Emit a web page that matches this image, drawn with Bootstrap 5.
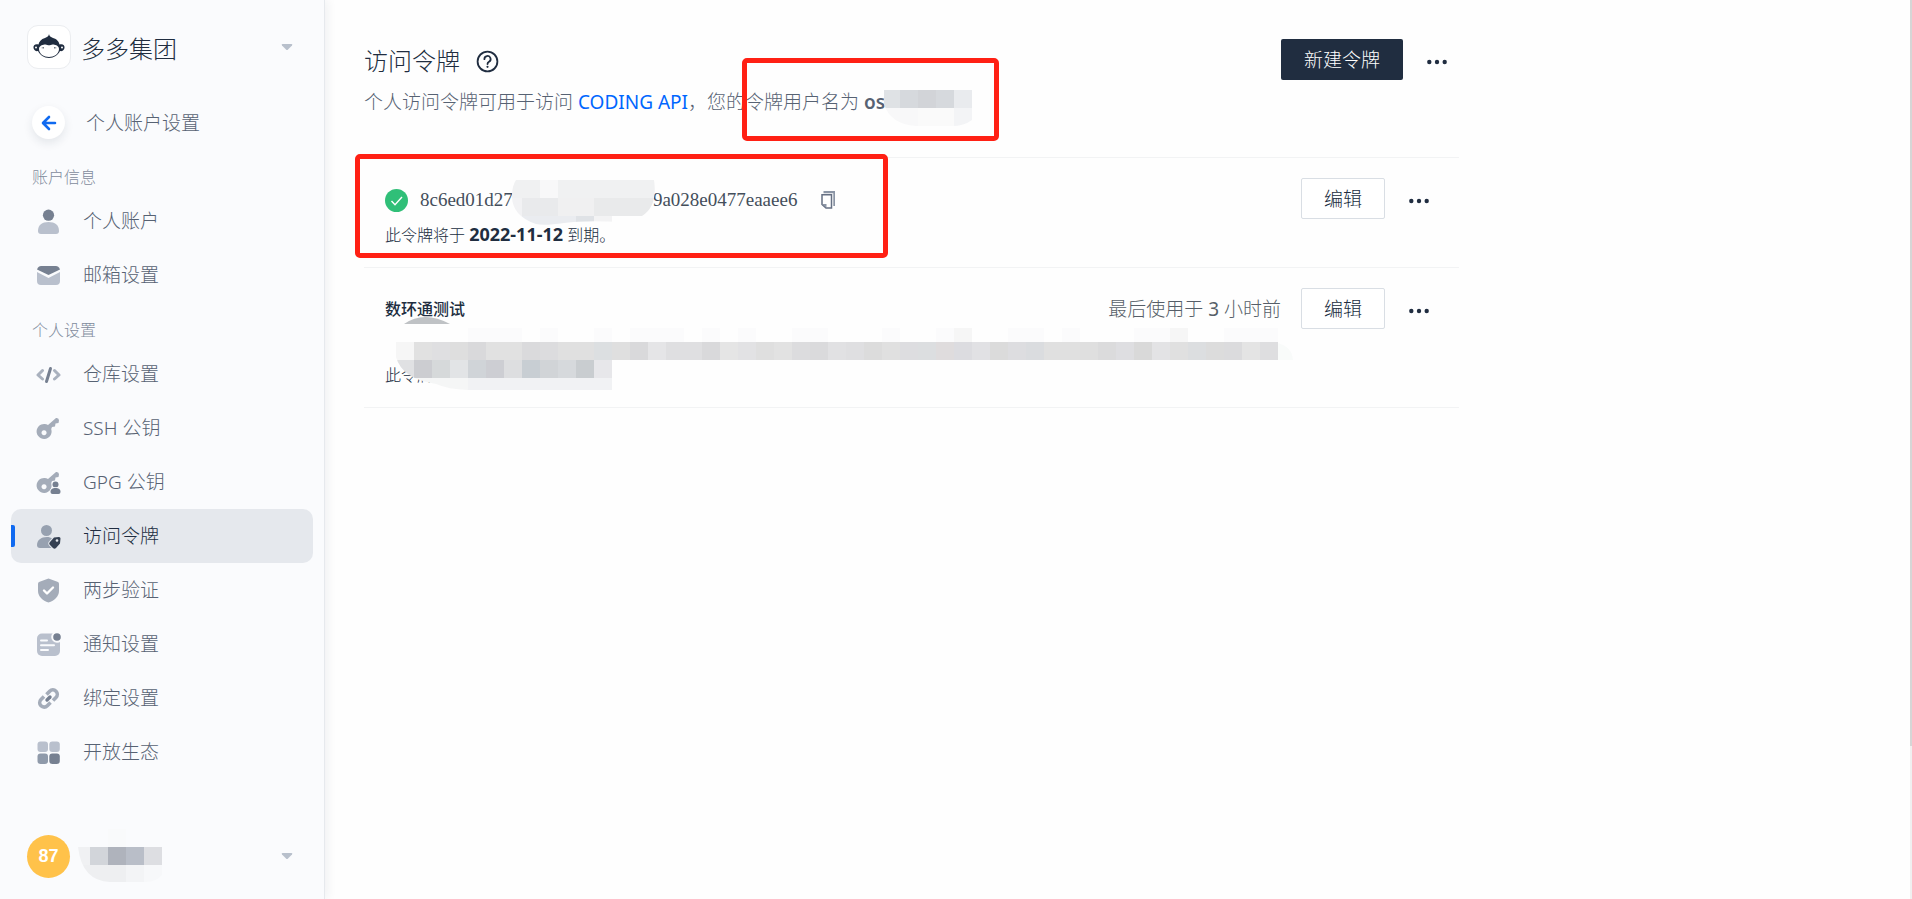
<!DOCTYPE html>
<html lang="zh-CN">
<head>
<meta charset="utf-8">
<meta name="viewport" content="width=device-width, initial-scale=1">
<title>访问令牌</title>
<link href="https://cdn.jsdelivr.net/npm/bootstrap@5.3.0/dist/css/bootstrap.min.css" rel="stylesheet">
<style>
  :root { --ink:#202d40; --muted:#576273; --soft:#7f8b9c; --line:#f2f3f4; --blue:#0066ff; --red:#ff2014; }
  body { font-family:"Noto Sans","Noto Sans CJK SC",sans-serif; font-size:19px; line-height:28px; font-weight:300; color:var(--ink); background:#fefefe; }
  a { text-decoration:none; }
  svg { display:block; flex:none; }
  .side { width:325px; background:#fafbfd; border-right:1px solid #e6e9ed; box-shadow:2px 0 10px rgba(32,45,64,.07); }
  .team-row { padding:25px 31px 0 27px; height:96px; gap:10px; }
  .logo { width:44px; height:44px; border-radius:11px; background:#fff; border:1px solid #ebedf0; }
  .title-text { font-size:24px; line-height:32px; font-weight:300; }
  .back-row { padding:0 0 0 32px; height:53px; gap:21px; color:var(--muted); }
  .back-dot { width:33px; height:33px; background:#fff; box-shadow:0 4px 10px rgba(32,45,64,.1); }
  .group-title { font-size:16px; line-height:24px; padding:16px 0 5px 32px; margin:0; font-weight:300; color:var(--soft); }
  .side-link { height:54px; margin:0 11px; padding-left:25px; gap:22px; color:var(--muted); border-radius:10px; position:relative; }
  .side-link.current { background:#e5e8ed; color:var(--ink); }
  .side-link.current::before { content:""; position:absolute; left:0; top:16px; width:4px; height:22px; background:#106af0; border-radius:0 2px 2px 0; }
  .user-row { padding:0 31px 16px 27px; gap:8px; }
  .avatar { width:43px; height:43px; background:#ffc24a; color:#fff; font:bold 18px "Liberation Sans",sans-serif; }
  .plain { border:0; background:none; padding:0; color:inherit; }
  .main-pane { padding:0 39px; }
  .content { max-width:1095px; }
  .page-head { height:158px; padding-top:39px; border-bottom:1px solid var(--line); }
  .heading-row { padding-top:6px; }
  .desc { color:var(--muted); margin:11px 0 0; white-space:nowrap; line-height:28px; }
  .desc a { color:var(--blue); font-weight:400; }
  .btn-flat { font-size:19px; line-height:28px; font-weight:300; padding:5px 22px; border-radius:2px; height:41px; }
  .btn-new { background:#202d40; color:#fff; }
  .btn-edit { background:#fff; border:1px solid #d9dee4; color:var(--ink); }
  .token { padding:20px 0 0 21px; border-bottom:1px solid var(--line); height:110px; }
  .token.tall { height:140px; }
  .acts { padding-right:30px; gap:20px; }
  .last-used { color:#565e68; }
  .code-text { font:400 19px/28px "Liberation Serif",serif; color:#444e5b; }
  .code-line { height:44px; }
  .small-text { font-size:16px; line-height:24px; }
  .small-text strong { font-size:18px; font-weight:700; }
  .name { font-size:16px; line-height:24px; font-weight:500; margin:0 0 42px; padding-top:9px; }
  .code-gap { width:140px; }
  .red-frame { position:absolute; border:5px solid var(--red); border-radius:5px; pointer-events:none; }
  .frame-user { left:378px; top:58px; width:257px; height:83px; }
  .frame-token { left:-9px; top:-4px; width:533px; height:104px; z-index:2; }
  .cover { position:absolute; }
  .cover-user { left:520px; top:90px; }
  .cover-code { left:148px; top:22px; }
  .cover-row { left:32px; top:48px; }
  .scroll-track { position:absolute; right:0; top:0; width:2px; height:100%; background:#f0f0f0; }
  .scroll-thumb { height:83%; background:#d6d6d6; }
</style>
</head>
<body>
<div class="d-flex min-vh-100 position-relative">
  <aside class="side d-flex flex-column flex-shrink-0">
    <div class="team-row d-flex align-items-start">
      <span class="logo d-flex align-items-center justify-content-center">
        <svg width="32" height="26" viewBox="0 0 32 26"><path d="M16 0c0 2 2 3 4 4 4 1 6 4 6.500 6.500 3-1 5.500.5 5 3.500-.4 2.500-2.500 3.500-4.500 3-2 4-6 7-11 7S7 21 5 17C3 17.500.9 16.500.5 14 0 11 2.500 9.500 5.500 10.500 6 8 8 5 12 4c2-1 4-2 4-4z" fill="#202d40"/><path d="M6 15c0-3 3-4 5.500-4.500 2-.5 3 .8 4.500.8s2.500-1.300 4.500-.8C23 11 26 12 26 15c0 5-5 8-10 8S6 20 6 15z" fill="#fff"/><path d="M8 14l3-1v1.500zM24 14l-3-1v1.500z" fill="#59616d"/><circle cx="3" cy="13.500" r="1" fill="#fff"/><circle cx="29" cy="13.500" r="1" fill="#fff"/></svg>
      </span>
      <span class="title-text mt-2">多多集团</span>
      <button class="plain ms-auto mt-3" aria-label="切换团队"><svg width="12" height="12" viewBox="0 0 12 12"><path d="M1.500 3h9q1.500 0 .5 1.500L7 8.500q-1 1-2 0L1 4.500Q0 3 1.500 3z" fill="#b8c0cc"/></svg></button>
    </div>
    <a href="#" class="back-row d-flex align-items-center">
      <span class="back-dot rounded-circle d-flex align-items-center justify-content-center"><svg width="16" height="16" viewBox="0 0 16 16" fill="none" stroke="#106af0" stroke-width="2.600" stroke-linecap="round" stroke-linejoin="round"><path d="M14 8H2.500M8 2L2 8l6 6"/></svg></span>
      <span>个人账户设置</span>
    </a>
    <nav>
      <h2 class="group-title">账户信息</h2>
      <a href="#" class="side-link d-flex align-items-center"><svg width="25" height="25" viewBox="0 0 25 25"><circle cx="12.500" cy="6.200" r="5.600" fill="#768091"/><path d="M2 22c0-6 4-9 10.500-9S23 16 23 22q0 3-3 3H5q-3 0-3-3z" fill="#b9c0cd"/></svg><span>个人账户</span></a>
      <a href="#" class="side-link d-flex align-items-center"><svg width="25" height="25" viewBox="0 0 25 25"><path d="M1 6.500C2 3.500 3.500 3 5 3h15c1.500 0 3 .5 4 3.500L12.500 12z" fill="#768091"/><path d="M1 9l11.500 6L24 9v9q0 4-4 4H5q-4 0-4-4z" fill="#b9c0cd"/></svg><span>邮箱设置</span></a>
      <h2 class="group-title">个人设置</h2>
      <a href="#" class="side-link d-flex align-items-center"><svg width="25" height="25" viewBox="0 0 25 25" fill="none" stroke-linecap="round" stroke-linejoin="round" stroke-width="3"><path d="M6.500 8.500L2 13l4.500 4M18.500 8.500L23 13l-4.500 4" stroke="#a9b1be"/><path d="M14.500 6.500l-4 13" stroke="#768091"/></svg><span>仓库设置</span></a>
      <a href="#" class="side-link d-flex align-items-center"><svg width="25" height="25" viewBox="0 0 25 25"><path fill="#a4acb9" fill-rule="evenodd" d="M20 2q3-.5 3 2.500l-.5 2.500-3 .5-.5 3-3 .5-.8 2A7.500 7.500 0 1 1 12 9zM8 14.300a2.500 2.500 0 1 0 .1 0z"/></svg><span>SSH 公钥</span></a>
      <a href="#" class="side-link d-flex align-items-center"><svg width="25" height="25" viewBox="0 0 25 25"><path fill="#a4acb9" fill-rule="evenodd" d="M20 2q3-.5 3 2.500l-.5 2.500-3 .5-.5 3-3 .5-.8 2A7.500 7.500 0 1 1 12 9zM8 14.300a2.500 2.500 0 1 0 .1 0z"/><g fill="#768091" stroke="#fafbfd" stroke-width="1.500" paint-order="stroke"><circle cx="19.500" cy="14.500" r="3"/><path d="M14.500 22c0-3 2-4 5-4s5 1 5 4q0 2-2 2h-6q-2 0-2-2z"/></g></svg><span>GPG 公钥</span></a>
      <a href="#" class="side-link current d-flex align-items-center" aria-current="page"><svg width="25" height="25" viewBox="0 0 25 25"><circle cx="10.500" cy="6.500" r="5.500" fill="#97a1b0"/><path d="M1 21c0-5 4-8 10-8 4 0 8 2 8 7l-2 4H4q-3 0-3-3z" fill="#97a1b0"/><path d="M18 13.500l5-.5q1.500 0 1.500 1.500l-.5 5-4 4.500q-1.500 1.500-3 0l-3-3q-1.500-1.500 0-3z" fill="#354052" stroke="#e5e8ed" stroke-width="2" paint-order="stroke"/><circle cx="21" cy="16.500" r="1.300" fill="#e5e8ed"/></svg><span>访问令牌</span></a>
      <a href="#" class="side-link d-flex align-items-center"><svg width="25" height="25" viewBox="0 0 25 25"><path d="M12.500.5L22 4q1 .5 1 2v7c0 5.500-4.500 9.500-10.500 11.500C6.500 22.500 2 18.500 2 13V6q0-1.500 1-2z" fill="#a4acb9"/><path d="M8 12.500l3 3 6-6" fill="none" stroke="#fff" stroke-width="2.400" stroke-linecap="round" stroke-linejoin="round"/></svg><span>两步验证</span></a>
      <a href="#" class="side-link d-flex align-items-center"><svg width="25" height="25" viewBox="0 0 25 25"><rect x="1" y="1.500" width="23" height="22.500" rx="5" fill="#b9c0cd"/><path d="M5 8.500h6M5 13.200h13M5 18h7" stroke="#fafbfd" stroke-width="2" stroke-linecap="round"/><circle cx="21" cy="5" r="4.800" fill="#768091" stroke="#fafbfd" stroke-width="2"/></svg><span>通知设置</span></a>
      <a href="#" class="side-link d-flex align-items-center"><svg width="25" height="25" viewBox="0 0 25 25" fill="none"><path d="M10.500 8.500l3.200-3.300a4.400 4.400 0 0 1 6.300 6.300l-3 3M14.500 16.500l-3.200 3.300A4.400 4.400 0 0 1 5 13.500l3-3" stroke="#a4acb9" stroke-width="3.600"/><path d="M11 14l3-3" stroke="#768091" stroke-width="3.400" stroke-linecap="round"/></svg><span>绑定设置</span></a>
      <a href="#" class="side-link d-flex align-items-center"><svg width="25" height="25" viewBox="0 0 25 25"><rect x="1.500" y="1.500" width="10.500" height="10.500" rx="3" fill="#b9c0cd"/><rect x="13.300" y="1.500" width="10.500" height="10.500" rx="3" fill="#b9c0cd"/><rect x="1.500" y="13.500" width="10.500" height="10.500" rx="3" fill="#8f9aaa"/><rect x="13.300" y="13.500" width="10.500" height="10.500" rx="3" fill="#768091"/></svg><span>开放生态</span></a>
    </nav>
    <div class="user-row d-flex align-items-center mt-auto">
      <span class="avatar rounded-circle d-flex align-items-center justify-content-center">87</span>
      <svg width="84" height="54" viewBox="0 0 84 54"><clipPath id="uc"><path d="M0 18h30V0h18v18h36v28q-6 7-16 7H32Q4 52 0 18z"/></clipPath><g clip-path="url(#uc)"><path fill="#f9fafb" d="M30 0h18v18H30z"/><path fill="#f0f1f3" d="M0 18h12v18H0z"/><path fill="#d2d5da" d="M12 18h18v18H12z"/><path fill="#afb3bc" d="M30 18h18v18H30z"/><path fill="#b9bec8" d="M48 18h18v18H48z"/><path fill="#dddee2" d="M66 18h18v18H66z"/><path fill="#eeeff1" d="M0 36h48v18H0z"/><path fill="#f3f4f6" d="M48 36h18v18H48z"/><path fill="#f7f8fa" d="M66 36h18v18H66z"/></g></svg>
      <button class="plain ms-auto" aria-label="账户菜单"><svg width="12" height="12" viewBox="0 0 12 12"><path d="M1.500 3h9q1.500 0 .5 1.500L7 8.500q-1 1-2 0L1 4.500Q0 3 1.500 3z" fill="#b8c0cc"/></svg></button>
    </div>
  </aside>

  <main class="main-pane flex-grow-1">
    <div class="content">
      <header class="page-head position-relative d-flex justify-content-between align-items-start">
        <div>
          <div class="heading-row d-flex align-items-center">
            <h1 class="title-text m-0">访问令牌</h1>
            <button class="plain ms-3" aria-label="帮助"><svg width="23" height="23" viewBox="0 0 23 23" fill="none" stroke="#202d40" stroke-width="1.800"><circle cx="11.500" cy="11.500" r="9.900"/><path d="M8.400 9.200a3.100 3.100 0 1 1 4.600 2.600c-1 .6-1.500 1.100-1.500 2.300" stroke-linecap="round"/><circle cx="11.500" cy="16.800" r="1.100" fill="#202d40" stroke="none"/></svg></button>
          </div>
          <p class="desc">个人访问令牌可用于访问 <a href="#">CODING API</a>，您的令牌用户名为 <span class="fw-semibold">os</span></p>
        </div>
        <div class="d-flex align-items-center gap-4 pe-2">
          <button class="btn btn-flat btn-new">新建令牌</button>
          <button class="plain mt-1 me-1" aria-label="更多"><svg width="20" height="6" viewBox="0 0 20 6" fill="#202d40"><circle cx="2.300" cy="3" r="2.200"/><circle cx="10" cy="3" r="2.200"/><circle cx="17.700" cy="3" r="2.200"/></svg></button>
        </div>
        <svg class="cover cover-user" width="88" height="36" viewBox="0 0 88 36"><clipPath id="oc"><path d="M0 0h88v30q-8 6-20 6H32Q6 34 0 14z"/></clipPath><g clip-path="url(#oc)"><path fill="#dfe2e5" d="M0 0h16v18H0z"/><path fill="#d6d9dd" d="M16 0h54v18H16z"/><path fill="#d2d4d8" d="M34 0h18v18H34z"/><path fill="#e9ebee" d="M70 0h18v18H70z"/><path fill="#f8f8f9" d="M0 18h34v18H0z"/><path fill="#fafafa" d="M34 18h36v18H34z"/><path fill="#f3f4f6" d="M70 18h18v18H70z"/></g></svg>
        <div class="red-frame frame-user"></div>
      </header>

      <section class="token position-relative d-flex justify-content-between align-items-start">
        <div>
          <div class="code-line d-flex align-items-center">
            <svg width="23" height="23" viewBox="0 0 23 23"><circle cx="11.500" cy="11.500" r="11.500" fill="#30bf78"/><path d="M6.500 12l3.500 3.700L17 8" fill="none" stroke="#fff" stroke-width="1.400"/></svg>
            <span class="code-text d-flex ms-2 ps-1"><span>8c6ed01d27</span><span class="code-gap"></span><span>9a028e0477eaaee6</span></span>
            <button class="plain ms-4" aria-label="复制"><svg width="14" height="18" viewBox="0 0 14 18"><path d="M2.500 1h11v14" fill="none" stroke="#8b95a5" stroke-width="2.400"/><path d="M1 3.800h9.500V17H5l-4-3.500z" fill="#fff" stroke="#667083" stroke-width="1.500"/><path d="M1 13h4.500v4" fill="#8b95a5"/></svg></button>
          </div>
          <div class="small-text">此令牌将于 <strong>2022-11-12</strong> 到期。</div>
        </div>
        <div class="acts d-flex align-items-center">
          <button class="btn btn-flat btn-edit">编辑</button>
          <button class="plain mt-1 ms-1" aria-label="更多"><svg width="20" height="6" viewBox="0 0 20 6" fill="#202d40"><circle cx="2.300" cy="3" r="2.200"/><circle cx="10" cy="3" r="2.200"/><circle cx="17.700" cy="3" r="2.200"/></svg></button>
        </div>
        <svg class="cover cover-code" width="144" height="46" viewBox="0 0 144 46"><clipPath id="tc"><path d="M4 0h138q4 26-12 36h-22v6q-34-2-56 1-20 3-28 1Q0 36 0 16 0 6 4 0z"/></clipPath><g clip-path="url(#tc)"><path fill="#f0f1f2" d="M0 0h144v18H0z"/><path fill="#f8f8f9" d="M28 0h18v18H28z"/><path fill="#e9eaec" d="M10 18h36v18H10z"/><path fill="#f2f2f4" d="M0 18h10v28H0z"/><path fill="#f0f0f1" d="M46 18h36v18H46z"/><path fill="#e9eaeb" d="M82 18h62v18H82z"/><path fill="#eaecf0" d="M10 36h54v10H10z"/><path fill="#dfe2e6" d="M64 36h18v10H64z"/><path fill="#f3f3f4" d="M82 36h18v10H82z"/></g></svg>
        <div class="red-frame frame-token"></div>
      </section>

      <section class="token tall position-relative d-flex justify-content-between align-items-start">
        <div>
          <h3 class="name">数环通测试</h3>
          <div class="small-text">此令牌</div>
        </div>
        <div class="acts d-flex align-items-center">
          <span class="last-used">最后使用于 <span class="fw-normal">3</span> 小时前</span>
          <button class="btn btn-flat btn-edit">编辑</button>
          <button class="plain mt-1 ms-1" aria-label="更多"><svg width="20" height="6" viewBox="0 0 20 6" fill="#202d40"><circle cx="2.300" cy="3" r="2.200"/><circle cx="10" cy="3" r="2.200"/><circle cx="17.700" cy="3" r="2.200"/></svg></button>
        </div>
        <svg class="cover cover-row" width="898" height="74" viewBox="0 0 898 74"><clipPath id="rc"><path d="M0 20h882q14 4 15 17H216v30h-30H86Q56 68 40 61 6 56 0 34zM0 4h882v17H0z"/></clipPath><path d="M8 8Q28-6 54 8z" fill="#bfc2c5"/><g clip-path="url(#rc)" transform="translate(0 7)" id="cells"></g></svg>
      </section>
    </div>
  </main>
  <div class="scroll-track"><div class="scroll-thumb"></div></div>
</div>
<script src="https://cdn.jsdelivr.net/npm/bootstrap@5.3.0/dist/js/bootstrap.bundle.min.js"></script>
<script>
  // Censor mosaic of the second token, drawn in 18px cells
  const cells = document.getElementById('cells');
  const cell = (x, y, h, fill, w = 18) => {
    const r = document.createElementNS('http://www.w3.org/2000/svg', 'rect');
    Object.entries({ x, y, width: w, height: h, fill }).forEach(([k, v]) => r.setAttribute(k, v));
    cells.appendChild(r);
  };
  [4, 5, 6, 8, 11, 13, 14, 15, 17, 19, 22, 23, 27, 30, 31, 34, 35, 37, 41, 42, 43, 46, 47, 48].forEach(i => cell(i * 18, 5, 14, i === 43 || i === 31 ? '#f6f6f6' : '#fbfbfc'));
  const band = ['#e1e1e1', '#dfdfe1', '#dedede', '#d9d9db', '#e1e1e1', '#e1e1e1', '#dadadc', '#dcdcde', '#e0e0e0', '#e0e0e0', '#dcdfe1', '#dfdfdf', '#d9d9db', '#e5e5e7', '#dfdfe1', '#dfdfe1', '#d9d9db', '#e5e5e5', '#e2e2e4', '#dfdfdf', '#e2e2e2', '#dcdcde', '#dadadc', '#e1e1e3', '#dfdfe1', '#dcdcdc', '#e0e0e0', '#dddde0', '#dcdee0', '#dfdcdd', '#dcdce0', '#e1e1e4', '#dbdbdb', '#dddde0', '#dadcdf', '#e0e0e0', '#e0e0e0', '#dfdfdf', '#dbdbdc', '#dedee1', '#d9d9d9', '#e3e3e5', '#e0e0e0', '#dcdee0', '#dcdcdc', '#dbdbdd', '#e4e4e4', '#dedee0'];
  cell(0, 19, 18, '#f6f6f6', 20);
  band.forEach((c, i) => cell(i * 18 + 18, 19, 18, c));
  cell(882, 19, 18, '#f9fbfa', 15);
  ['#e0e1e3', '#cccdd1', '#d6d9da', '#e2e4e6', '#d0d4d8', '#cdced3', '#dddee0', '#c8ced3', '#d1d4d7', '#d6d9dc', '#c9cdd0', '#e7e7ea'].forEach((c, i) => {
    cell(i * 18, 37, 18, c);
    cell(i * 18, 55, 12, i > 3 ? '#f1f2f4' : '#f5f6f6');
  });
</script>
</body>
</html>
